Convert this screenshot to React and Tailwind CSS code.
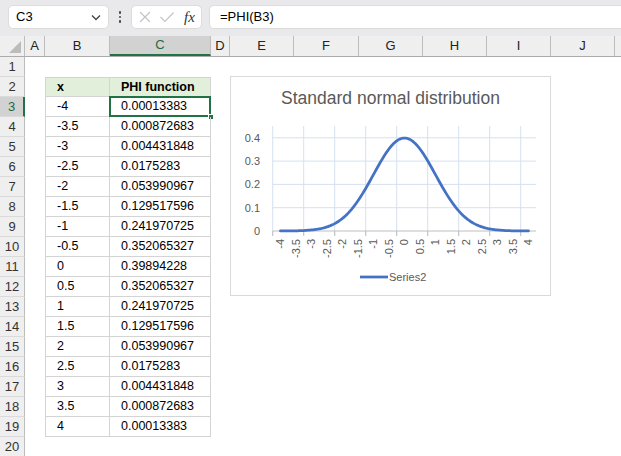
import React from 'react';

const cols = [
  { k: 'A', w: 20 },
  { k: 'B', w: 65 },
  { k: 'C', w: 101 },
  { k: 'D', w: 19 },
  { k: 'E', w: 64 },
  { k: 'F', w: 65 },
  { k: 'G', w: 64 },
  { k: 'H', w: 64 },
  { k: 'I', w: 64 },
  { k: 'J', w: 64 },
  { k: '', w: 30 },
];

const data = [
  ['-4', '0.00013383'],
  ['-3.5', '0.000872683'],
  ['-3', '0.004431848'],
  ['-2.5', '0.0175283'],
  ['-2', '0.053990967'],
  ['-1.5', '0.129517596'],
  ['-1', '0.241970725'],
  ['-0.5', '0.352065327'],
  ['0', '0.39894228'],
  ['0.5', '0.352065327'],
  ['1', '0.241970725'],
  ['1.5', '0.129517596'],
  ['2', '0.053990967'],
  ['2.5', '0.0175283'],
  ['3', '0.004431848'],
  ['3.5', '0.000872683'],
  ['4', '0.00013383'],
];

const x0 = 41.7;
const step = 15.5;
const y0 = 154;
const yScale = 233;
const px = (v) => x0 + step * ((v + 4) * 2 + 0.5);
const pdf = (v) => Math.exp((-v * v) / 2) / Math.sqrt(2 * Math.PI);

function Chart() {
  const pts = [];
  for (let v = -4; v <= 4.0001; v += 0.05) {
    pts.push(`${px(v).toFixed(2)},${(y0 - pdf(v) * yScale).toFixed(2)}`);
  }
  const labels = ['-4', '-3.5', '-3', '-2.5', '-2', '-1.5', '-1', '-0.5', '0', '0.5', '1', '1.5', '2', '2.5', '3', '3.5', '4'];
  return (
    <div className="absolute left-[230px] top-[19px] w-[321px] h-[220px] border border-[#d9d9d9] bg-white">
      <div className="absolute left-0 right-0 top-[8px] text-center text-[17.5px] text-[#595959]">
        Standard normal distribution
      </div>
      <svg width="321" height="220" className="absolute left-0 top-0" style={{ fontFamily: '"Liberation Sans", Arial, sans-serif' }}>
        {[0.1, 0.2, 0.3, 0.4].map((g) => (
          <line key={g} x1={x0} x2={305} y1={y0 - g * yScale} y2={y0 - g * yScale} stroke="#d6e0f0" strokeWidth="1" />
        ))}
        {[0, 1, 2, 3, 4, 5, 6, 7, 8].map((i) => (
          <line key={i} x1={x0 + 31 * i} x2={x0 + 31 * i} y1={49} y2={159} stroke="#d6e0f0" strokeWidth="1" />
        ))}
        <line x1={x0} x2={305} y1={y0} y2={y0} stroke="#bfbfbf" strokeWidth="1" />
        {[0, 1, 2, 3, 4, 5, 6, 7, 8].map((i) => (
          <line key={'t' + i} x1={x0 + 31 * i} x2={x0 + 31 * i} y1={y0} y2={159} stroke="#bfbfbf" strokeWidth="1" />
        ))}
        {['0', '0.1', '0.2', '0.3', '0.4'].map((t, i) => (
          <text key={t} x={29} y={y0 - i * 0.1 * yScale} dy="0.35em" textAnchor="end" fontSize="11" fill="#595959">
            {t}
          </text>
        ))}
        {labels.map((t, i) => (
          <text
            key={t}
            transform={`translate(${x0 + step * (i + 0.5)},162) rotate(-90)`}
            dy="0.35em"
            textAnchor="end"
            fontSize="11"
            fill="#595959"
          >
            {t}
          </text>
        ))}
        <polyline points={pts.join(' ')} fill="none" stroke="#4472c4" strokeWidth="2.75" strokeLinejoin="round" strokeLinecap="round" />
        <line x1={129} x2={157} y1={200} y2={200} stroke="#4472c4" strokeWidth="2.75" />
        <text x={158} y={200} dy="0.35em" fontSize="11" fill="#595959">
          Series2
        </text>
      </svg>
    </div>
  );
}

function Row({ n, children }) {
  const sel = n === 3;
  return (
    <div className="flex h-[20px]">
      <div
        className={`w-[25px] shrink-0 flex items-center justify-center text-[13px] border-b border-[#dadada] ${
          sel ? 'bg-[#d2d2d2] text-[#1e6b3f] border-r-2 border-r-[#217346]' : 'bg-[#efefef] text-[#333] border-r border-r-[#bdbdbd]'
        }`}
      >
        {n}
      </div>
      {children}
    </div>
  );
}

export default function App() {
  return (
    <div className="w-[621px] h-[456px] overflow-hidden bg-white text-black" style={{ fontFamily: '"Liberation Sans", Arial, sans-serif' }}>
      {/* formula bar */}
      <div className="h-[36px] bg-[#e9e9ec] flex items-start pt-[5px] gap-0">
        <div className="ml-[8px] w-[101px] h-[24px] bg-white rounded-[5px] border border-[#dcdcdc] flex items-center justify-between pl-[7px] pr-[6px] text-[13px]">
          <span>C3</span>
          <svg width="12" height="12" viewBox="0 0 12 12">
            <path d="M2 4.5 L6 8.5 L10 4.5" fill="none" stroke="#444" strokeWidth="1.3" />
          </svg>
        </div>
        <div className="w-[22px] h-[24px] flex flex-col items-center justify-center gap-[2px]">
          <span className="w-[2.5px] h-[2.5px] bg-[#444] rounded-full" />
          <span className="w-[2.5px] h-[2.5px] bg-[#444] rounded-full" />
          <span className="w-[2.5px] h-[2.5px] bg-[#444] rounded-full" />
        </div>
        <div className="w-[71px] h-[24px] bg-white rounded-[5px] border border-[#dcdcdc] flex items-center pl-[6px] gap-[7px]">
          <svg width="14" height="14" viewBox="0 0 14 14">
            <path d="M2 2 L12 12 M12 2 L2 12" stroke="#c4c4c4" strokeWidth="1.2" />
          </svg>
          <svg width="16" height="14" viewBox="0 0 16 14">
            <path d="M1.5 7 L6 11.5 L14.5 2.5" fill="none" stroke="#c4c4c4" strokeWidth="1.2" />
          </svg>
          <span className="text-[15px] italic text-[#333] ml-[2px]" style={{ fontFamily: '"Liberation Serif", serif' }}>
            fx
          </span>
        </div>
        <div className="ml-[7px] flex-1 h-[24px] bg-white rounded-l-[5px] border border-r-0 border-[#dcdcdc] flex items-center pl-[10px] text-[13px]">
          =PHI(B3)
        </div>
      </div>

      {/* column headers */}
      <div className="flex h-[21px] bg-[#efefef] border-b border-[#ababab]">
        <div className="w-[25px] shrink-0 relative border-r border-[#bdbdbd]">
          <svg width="12" height="12" className="absolute right-[3px] bottom-[3px]" viewBox="0 0 12 12">
            <path d="M12 0 L12 12 L0 12 Z" fill="#bcbcbc" />
          </svg>
        </div>
        {cols.map((c) => (
          <div
            key={c.k + c.w}
            style={{ width: c.w }}
            className={`shrink-0 flex items-center justify-center text-[13px] border-r border-[#bdbdbd] ${
              c.k === 'C' ? 'bg-[#d2d2d2] text-[#1e6b3f] border-b-2 border-b-[#217346]' : 'text-[#222]'
            }`}
          >
            {c.k}
          </div>
        ))}
      </div>

      {/* sheet */}
      <div className="relative">
        <Row n={1} />
        <Row n={2}>
          <div className="w-[20px] shrink-0" />
          <div className="w-[65px] shrink-0 bg-[#e2efda] border border-[#d4d4d4] flex items-center pl-[11px] text-[12.5px] font-bold">x</div>
          <div className="w-[101px] shrink-0 bg-[#e2efda] border border-l-0 border-[#d4d4d4] flex items-center pl-[11px] text-[12.5px] font-bold">
            PHI function
          </div>
        </Row>
        {data.map((d, i) => (
          <Row key={i} n={i + 3}>
            <div className="w-[20px] shrink-0" />
            <div className="w-[65px] shrink-0 border-x border-b border-[#d4d4d4] flex items-center pl-[11px] text-[12.5px]">{d[0]}</div>
            <div className="w-[101px] shrink-0 border-r border-b border-[#d4d4d4] flex items-center pl-[11px] text-[12.5px] relative">
              {d[1]}
              {i === 0 && (
                <>
                  <div className="absolute left-[-1px] top-[-1px] right-[-1px] bottom-[-1px] border-2 border-[#217346]" />
                  <div className="absolute right-[-4px] bottom-[-4px] w-[6px] h-[6px] bg-[#217346] border border-white" />
                </>
              )}
            </div>
          </Row>
        ))}
        <Row n={20} />
        <Chart />
      </div>
    </div>
  );
}
